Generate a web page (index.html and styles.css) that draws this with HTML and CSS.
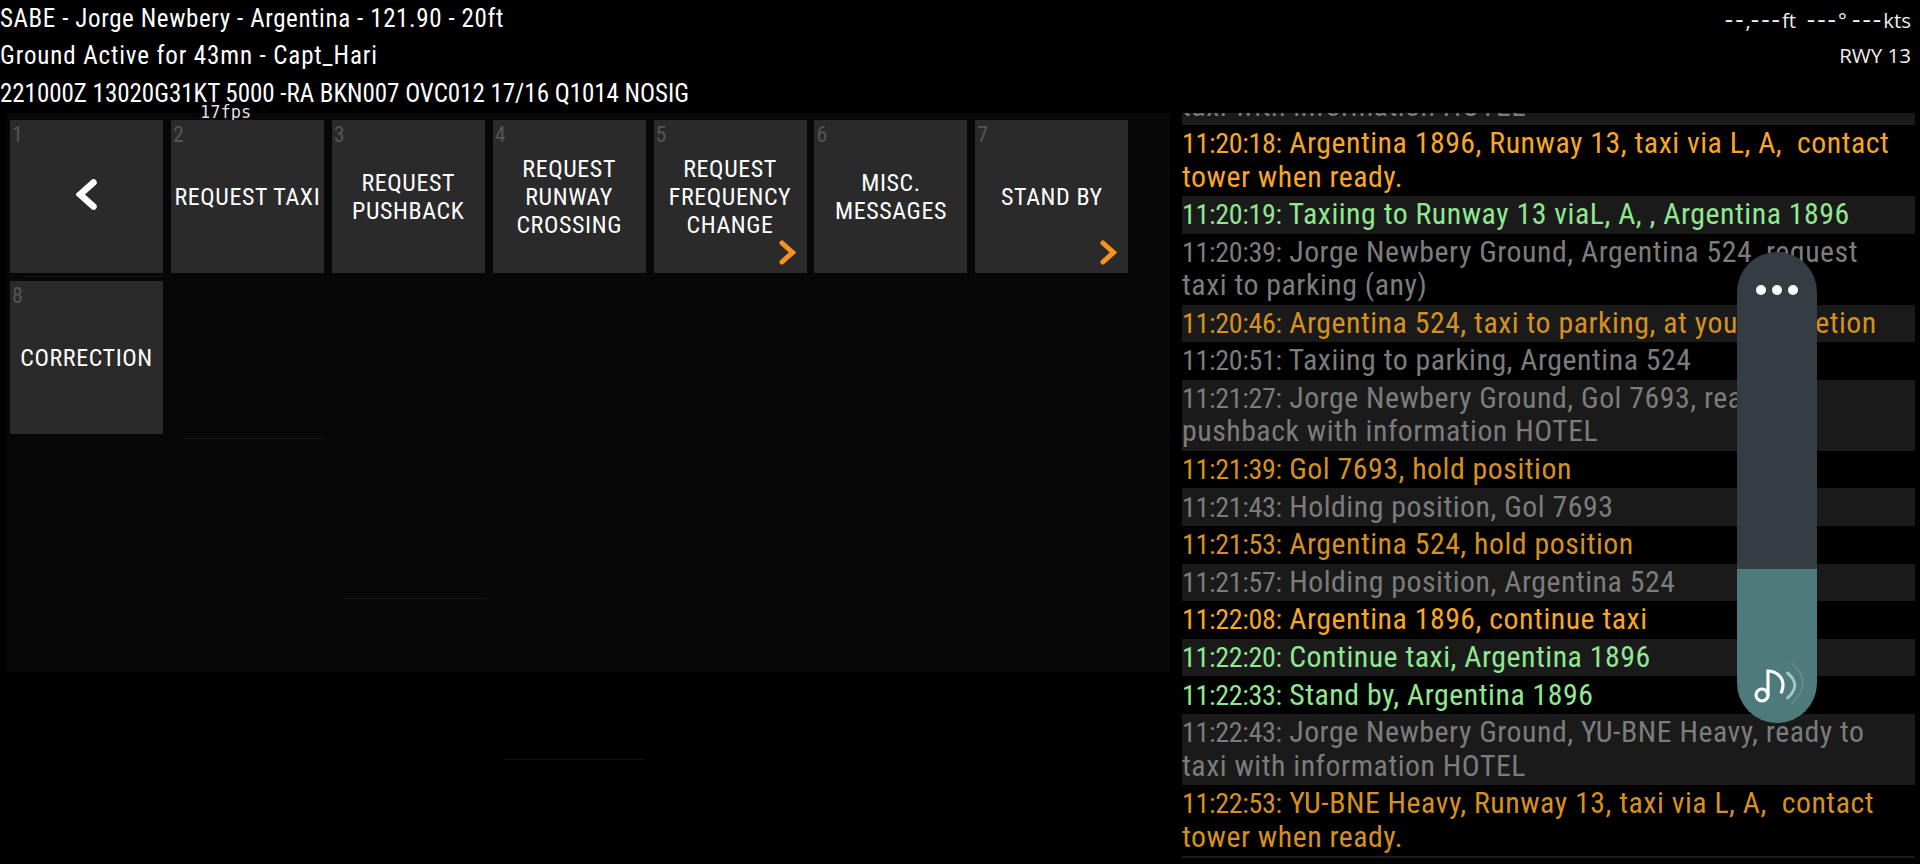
FILE: index.html
```html
<!DOCTYPE html>
<html lang="en">
<head>
<meta charset="utf-8">
<title>SABE Ground</title>
<link rel="stylesheet" href="styles.css">
</head>
<body>
<div class="page">
  <header class="top">
    <div class="top-left">
      <div class="top-line l1">SABE - Jorge Newbery - Argentina - 121.90 - 20ft</div>
      <div class="top-line l2">Ground Active for 43mn - Capt_Hari</div>
      <div class="top-line l3">221000Z 13020G31KT 5000 -RA BKN007 OVC012 17/16 Q1014 NOSIG</div>
    </div>
    <div class="top-right">
      <div class="top-line"><span class="dash">--</span>,<span class="dash">---</span>ft&nbsp; <span class="dash">---</span>° <span class="dash">---</span>kts</div>
      <div class="top-line">RWY 13</div>
    </div>
  </header>
  <div class="fps">17fps</div>
  <main class="main">
    <section class="menu">
      <div class="grid">
        <button class="card"><span class="num">1</span><svg class="back" viewBox="0 0 21 31"><path d="M17.5 3.5 4 15.5 17.5 27.5"/></svg></button>
        <button class="card"><span class="num">2</span>REQUEST TAXI</button>
        <button class="card"><span class="num">3</span>REQUEST<br>PUSHBACK</button>
        <button class="card"><span class="num">4</span>REQUEST<br>RUNWAY<br>CROSSING</button>
        <button class="card"><span class="num">5</span>REQUEST<br>FREQUENCY<br>CHANGE<svg class="more" viewBox="0 0 17 25"><path d="M3 3 13.5 12.5 3 22"/></svg></button>
        <button class="card"><span class="num">6</span>MISC.<br>MESSAGES</button>
        <button class="card"><span class="num">7</span>STAND BY<svg class="more" viewBox="0 0 17 25"><path d="M3 3 13.5 12.5 3 22"/></svg></button>
        <button class="card"><span class="num">8</span>CORRECTION</button>
      </div>
    </section>
    <section class="log">
      <div class="row stripe gray"><span class="t">11:19:58:</span> Jorge Newbery Ground, Argentina 1896, ready to<br>taxi with information HOTEL</div>
      <div class="row orange"><span class="t">11:20:18:</span> Argentina 1896, Runway 13, taxi via L, A,&nbsp; contact<br>tower when ready.</div>
      <div class="row stripe green"><span class="t">11:20:19:</span> Taxiing to Runway 13 viaL, A, , Argentina 1896</div>
      <div class="row gray"><span class="t">11:20:39:</span> Jorge Newbery Ground, Argentina 524, request<br>taxi to parking (any)</div>
      <div class="row stripe orange-dim"><span class="t">11:20:46:</span> Argentina 524, taxi to parking, at your discretion</div>
      <div class="row gray"><span class="t">11:20:51:</span> Taxiing to parking, Argentina 524</div>
      <div class="row stripe gray"><span class="t">11:21:27:</span> Jorge Newbery Ground, Gol 7693, ready for<br>pushback with information HOTEL</div>
      <div class="row orange-dim"><span class="t">11:21:39:</span> Gol 7693, hold position</div>
      <div class="row stripe gray"><span class="t">11:21:43:</span> Holding position, Gol 7693</div>
      <div class="row orange-dim"><span class="t">11:21:53:</span> Argentina 524, hold position</div>
      <div class="row stripe gray"><span class="t">11:21:57:</span> Holding position, Argentina 524</div>
      <div class="row orange"><span class="t">11:22:08:</span> Argentina 1896, continue taxi</div>
      <div class="row stripe green"><span class="t">11:22:20:</span> Continue taxi, Argentina 1896</div>
      <div class="row green"><span class="t">11:22:33:</span> Stand by, Argentina 1896</div>
      <div class="row stripe gray"><span class="t">11:22:43:</span> Jorge Newbery Ground, YU-BNE Heavy, ready to<br>taxi with information HOTEL</div>
      <div class="row orange-dim last"><span class="t">11:22:53:</span> YU-BNE Heavy, Runway 13, taxi via L, A,&nbsp; contact<br>tower when ready.</div>
    </section>
  </main>
  <i class="ghost g1"></i><i class="ghost g2"></i><i class="ghost g3"></i><i class="ghost g4"></i>
  <div class="volume">
    <div class="volume-top"><span class="dot"></span><span class="dot"></span><span class="dot"></span></div>
    <div class="volume-fill">
      <svg class="note" viewBox="0 0 48 36">
        <circle cx="6" cy="26" r="6" class="s1"/>
        <path d="M12 26V2C20 2 27 8 27 16c0 3-.5 5-1.500 7" class="s1"/>
        <path d="M31.500 4Q46 16 31.500 29" class="s2"/>
        <path d="M36-6Q58 14 36 34" class="s3"/>
      </svg>
    </div>
  </div>
</div>
</body>
</html>
```

FILE: styles.css
```css
* { box-sizing: border-box; }
html, body { margin: 0; padding: 0; background: #000; }
body { font-family: "Liberation Sans Narrow", "Roboto Condensed", "Liberation Sans", sans-serif; color: #fff; }
.page { position: relative; width: 1920px; height: 864px; overflow: hidden; display: flex; flex-direction: column; }

.top { height: 113px; display: flex; justify-content: space-between; flex: none; }
.top-line { height: 37.3px; line-height: 37.3px; white-space: nowrap; }
.top-left { font-size: 25px; }
.l1 { letter-spacing: 0.6px; }
.l2 { letter-spacing: 0.88px; }
.l3 { letter-spacing: -0.03px; }
.top-right { font-family: "Open Sans", sans-serif; font-size: 20.5px; text-align: right; padding-right: 9px; color: #eee; }
.dash { font-size: 26px; letter-spacing: 2px; }

.fps { position: absolute; left: 200px; top: 103px; font-family: "DejaVu Sans Mono", monospace; font-size: 17px; line-height: 18px; color: #ddd; }

.main { flex: 1; display: flex; min-height: 0; }
.menu { width: 1163px; height: 559px; margin-left: 7px; padding: 7px 0 0 3px; background: #070707; flex: none; }
.grid { display: grid; grid-template-columns: repeat(7, 153px); grid-auto-rows: 153px; gap: 7.900px; }

.card { position: relative; display: block; padding: 1px 0 0; border: 0; background: #2a2a2a; color: #fff; font: inherit; font-size: 24px; line-height: 28px; letter-spacing: 0.6px; text-align: center; }
.num { position: absolute; left: 2px; top: 2px; font-size: 22px; line-height: 26px; letter-spacing: 0; color: #555; }
.back { position: absolute; left: 66px; top: 59px; width: 21px; height: 31px; fill: none; stroke: #fff; stroke-width: 6.500; stroke-linecap: round; stroke-linejoin: miter; }
.more { position: absolute; right: 11px; bottom: 8px; width: 17px; height: 25px; fill: none; stroke: #f7931e; stroke-width: 5; stroke-linecap: round; }

.log { width: 733px; margin-left: 12px; height: 751px; padding-bottom: 6px; display: flex; flex-direction: column; justify-content: flex-end; overflow: hidden; flex: none; font-size: 29.800px; letter-spacing: 0.52px; line-height: 33.400px; }
.row { flex: none; padding: 1.100px 0 3.100px; white-space: nowrap; }
.t { font-size: 28px; line-height: 1; letter-spacing: -0.3px; }
.stripe { background: #1a1a1a; }
.gray { color: #7c7c7c; }
.green { color: #90e890; }
.orange { color: #f8a625; }
.orange-dim { color: #d6901f; }
.last { border-bottom: 2px solid #1c1c1c; }

.ghost { position: absolute; height: 1px; background: #151515; }
.g1 { left: 24px; top: 276px; width: 139px; }
.g2 { left: 184px; top: 438px; width: 141px; }
.g3 { left: 344px; top: 598px; width: 143px; }
.g4 { left: 504px; top: 759px; width: 141px; background: #111; }

.volume { position: absolute; left: 1737px; top: 252px; width: 80px; height: 471px; border-radius: 40px; overflow: hidden; display: flex; flex-direction: column; }
.volume-top { height: 317px; background: #353d44; display: flex; justify-content: center; gap: 6px; padding-top: 33px; }
.dot { width: 10px; height: 10px; border-radius: 50%; background: #fff; }
.volume-fill { flex: 1; background: #4f7a7c; position: relative; }
.note { position: absolute; left: 19px; top: 100px; width: 48px; height: 36px; fill: none; stroke-linecap: round; overflow: visible; }
.s1 { stroke: #fff; stroke-width: 3.200; }
.s2 { stroke: #a9c4c4; stroke-width: 3; }
.s3 { stroke: #64898b; stroke-width: 2; }
```
